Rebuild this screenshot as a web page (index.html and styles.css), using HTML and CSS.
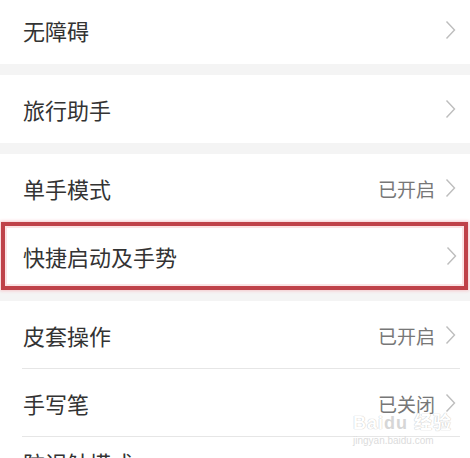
FILE: index.html
```html
<!DOCTYPE html>
<html lang="zh-CN">
<head>
  <meta charset="UTF-8" />
  <title>设置</title>
  <link rel="stylesheet" href="styles.css">
</head>
<body>
  <div class="page">
    <div class="group first">
      <div class="row">
        <span class="label">无障碍</span>
        <span class="chev"><svg width="11" height="20" viewBox="0 0 11 20"><path d="M1.5 1.5 L9.5 10 L1.5 18.5" fill="none" stroke="#bdbdbd" stroke-width="1.4"/></svg></span>
      </div>
    </div>

    <div class="group">
      <div class="row">
        <span class="label">旅行助手</span>
        <span class="chev"><svg width="11" height="20" viewBox="0 0 11 20"><path d="M1.5 1.5 L9.5 10 L1.5 18.5" fill="none" stroke="#bdbdbd" stroke-width="1.4"/></svg></span>
      </div>
    </div>

    <div class="group">
      <div class="row">
        <span class="label">单手模式</span>
        <span class="value">已开启</span>
        <span class="chev"><svg width="11" height="20" viewBox="0 0 11 20"><path d="M1.5 1.5 L9.5 10 L1.5 18.5" fill="none" stroke="#bdbdbd" stroke-width="1.4"/></svg></span>
      </div>
      <div class="row marked">
        <span class="label">快捷启动及手势</span>
        <span class="chev"><svg width="11" height="20" viewBox="0 0 11 20"><path d="M1.5 1.5 L9.5 10 L1.5 18.5" fill="none" stroke="#bdbdbd" stroke-width="1.4"/></svg></span>
      </div>
    </div>

    <div class="group">
      <div class="row line">
        <span class="label">皮套操作</span>
        <span class="value">已开启</span>
        <span class="chev"><svg width="11" height="20" viewBox="0 0 11 20"><path d="M1.5 1.5 L9.5 10 L1.5 18.5" fill="none" stroke="#bdbdbd" stroke-width="1.4"/></svg></span>
      </div>
      <div class="row line">
        <span class="label">手写笔</span>
        <span class="value">已关闭</span>
        <span class="chev"><svg width="11" height="20" viewBox="0 0 11 20"><path d="M1.5 1.5 L9.5 10 L1.5 18.5" fill="none" stroke="#bdbdbd" stroke-width="1.4"/></svg></span>
      </div>
      <div class="row last">
        <span class="label">防误触模式</span>
      </div>
    </div>

    <div class="watermark">
      <div class="wm-logo">Bai<span class="wm-du">du</span> 经验</div>
      <div class="wm-url">jingyan.baidu.com</div>
    </div>
  </div>
</body>
</html>
```

FILE: styles.css
```css
* {
  box-sizing: border-box;
}

body {
  margin: 0;
  background: #f4f4f4;
  font-family: "Noto Sans CJK SC", "Noto Sans", sans-serif;
  overflow: hidden;
}

.page {
  position: relative;
  width: 470px;
  height: 458px;
  overflow: hidden;
  display: flex;
  flex-direction: column;
  gap: 11px;
}

.group {
  background: #fff;
  display: flex;
  flex-direction: column;
  flex-shrink: 0;
}

.group.first {
  margin-top: -4px;
}

.row {
  display: flex;
  align-items: center;
  height: 68px;
  flex-shrink: 0;
  padding: 0 14px 0 23px;
}

.row.line {
  position: relative;
}

.row.line::after {
  content: "";
  position: absolute;
  left: 22px;
  right: 10px;
  bottom: 0;
  height: 1px;
  background: #e6e6e6;
}

.row.last {
  align-items: flex-start;
  padding-top: 9px;
}

.label {
  flex: 1;
  font-size: 22px;
  line-height: 32px;
  color: #333;
}

.value {
  font-size: 19px;
  line-height: 21px;
  color: #777;
  margin-right: 10px;
}

.chev {
  display: flex;
  align-items: center;
}

.marked {
  margin: 0 2px 0 1px;
  padding-left: 22px;
  padding-right: 11px;
  outline: 4px solid #bf4249;
  outline-offset: -4px;
  box-shadow: inset 0 0 0 6px #fbe3e4, 0 0 3px 1px #f6c9cc;
}

.watermark {
  position: absolute;
  left: 353px;
  top: 415px;
  color: #fff;
  text-shadow: 0 0 1px #c8c8c8, 0 0 1px #c8c8c8;
  font-family: "Liberation Sans", "Noto Sans CJK SC", sans-serif;
}

.wm-logo {
  font-size: 18px;
  font-weight: bold;
  line-height: 17px;
  letter-spacing: 1px;
}

.wm-du {
  color: #d6d6d6;
  text-shadow: none;
}

.wm-url {
  margin-top: 4px;
  font-size: 10px;
  line-height: 10px;
  color: #dcdcdc;
  text-shadow: none;
}
```
